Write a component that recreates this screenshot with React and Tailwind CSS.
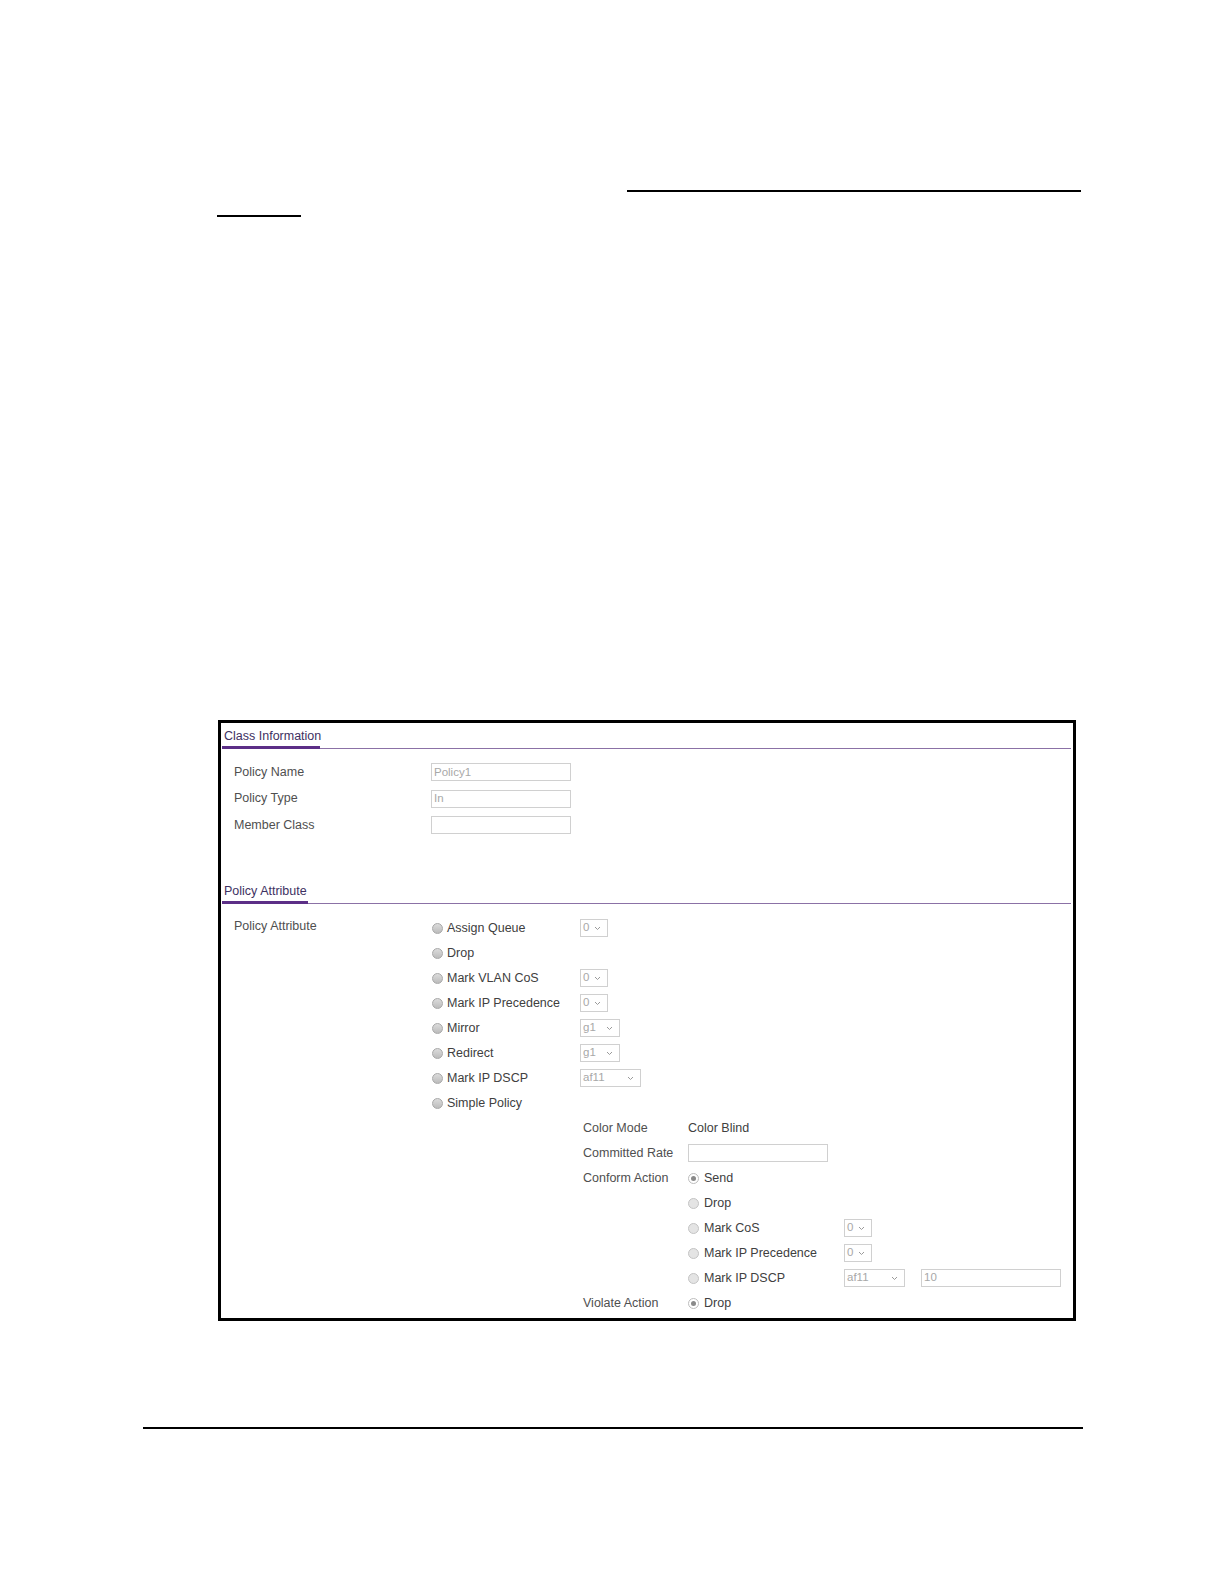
import React from "react";

function Chevron() {
  return (
    <svg className="w-[7px] h-[5px]" viewBox="0 0 7 5" fill="none">
      <path d="M1 1l2.5 2.5L6 1" stroke="#9a9a9a" strokeWidth="1" />
    </svg>
  );
}

function Select({ value, w }) {
  return (
    <div
      className={`${w} h-[18px] border border-[#d0d0d0] bg-white flex items-center justify-between pl-[2px] pr-[6px] text-[11.5px] text-[#a8a8a8]`}
    >
      <span>{value}</span>
      <Chevron />
    </div>
  );
}

function TextBox({ value }) {
  return (
    <div className="w-[140px] h-[18px] border border-[#d0d0d0] bg-white flex items-center pl-[2px] text-[11.5px] text-[#a8a8a8]">
      {value}
    </div>
  );
}

function Radio({ checked, light }) {
  if (checked) {
    return (
      <span className="w-[11px] h-[11px] rounded-full border border-[#bdbdbd] bg-white flex items-center justify-center shrink-0">
        <span className="w-[5px] h-[5px] rounded-full bg-[#8a8a8a]" />
      </span>
    );
  }
  return (
    <span
      className={`w-[11px] h-[11px] rounded-full border shrink-0 ${
        light
          ? "border-[#c4c4c4] bg-[#e4e4e4]"
          : "border-[#a8a8a8] bg-gradient-to-b from-[#dcdcdc] to-[#bcbcbc]"
      }`}
    />
  );
}

function Heading({ title, w }) {
  return (
    <div className="ml-[1px] border-b border-[#8b71a6] flex">
      <span
        className={`${w} whitespace-nowrap pl-[2px] -mb-px border-b-[3px] border-[#5c2f87] text-[12.5px] text-[#3e3162] leading-[18px] pb-[1px]`}
      >
        {title}
      </span>
    </div>
  );
}

const attrRows = [
  { label: "Assign Queue", sel: "0", w: "w-[28px]" },
  { label: "Drop" },
  { label: "Mark VLAN CoS", sel: "0", w: "w-[28px]" },
  { label: "Mark IP Precedence", sel: "0", w: "w-[28px]" },
  { label: "Mirror", sel: "g1", w: "w-[40px]" },
  { label: "Redirect", sel: "g1", w: "w-[40px]" },
  { label: "Mark IP DSCP", sel: "af11", w: "w-[61px]" },
  { label: "Simple Policy" },
];

const conformRows = [
  { label: "Send", checked: true },
  { label: "Drop" },
  { label: "Mark CoS", sel: "0", w: "w-[28px]" },
  { label: "Mark IP Precedence", sel: "0", w: "w-[28px]" },
  { label: "Mark IP DSCP", sel: "af11", w: "w-[61px]", text: "10" },
];

export default function App() {
  return (
    <div className="w-[1224px] h-[1584px] bg-white font-['Liberation_Sans',Arial,sans-serif] text-[12.5px] text-[#4f4f4f]">
      <div className="pt-[190px]">
        <div className="ml-[627px] w-[454px] h-[2px] bg-black" />
        <div className="mt-[23px] ml-[217px] w-[84px] h-[2px] bg-black" />
      </div>

      <div className="mt-[503px] ml-[218px] w-[858px] h-[601px] border-[3px] border-black pt-[4px] pr-[2px]">
        <Heading title="Class Information" w="w-[98px]" />

        <div className="mt-[10px] pl-[13px]">
          {[
            ["Policy Name", "Policy1"],
            ["Policy Type", "In"],
            ["Member Class", ""],
          ].map(([label, val]) => (
            <div key={label} className="h-[26.5px] flex items-center">
              <span className="w-[197px]">{label}</span>
              <TextBox value={val} />
            </div>
          ))}
        </div>

        <div className="mt-[43px]">
          <Heading title="Policy Attribute" w="w-[86px]" />
        </div>

        <div className="mt-[12px] pl-[13px] flex">
          <div className="w-[197px] h-[22px] flex items-center">
            Policy Attribute
          </div>
          <div className="flex flex-col">
            {attrRows.map((r) => (
              <div key={r.label} className="h-[25px] flex items-center">
                <div className="w-[149px] flex items-center gap-[4px] pl-[1px] text-[#404040]">
                  <Radio />
                  <span>{r.label}</span>
                </div>
                {r.sel && <Select value={r.sel} w={r.w} />}
              </div>
            ))}

            <div className="pl-[152px]">
              <div className="h-[25px] flex items-center">
                <span className="w-[105px]">Color Mode</span>
                <span className="text-[#404040]">Color Blind</span>
              </div>
              <div className="h-[25px] flex items-center">
                <span className="w-[105px]">Committed Rate</span>
                <TextBox value="" />
              </div>
              <div className="flex">
                <span className="w-[105px] h-[25px] flex items-center">
                  Conform Action
                </span>
                <div className="flex flex-col">
                  {conformRows.map((r) => (
                    <div key={r.label} className="h-[25px] flex items-center">
                      <div className="w-[156px] flex items-center gap-[5px] text-[#404040]">
                        <Radio checked={r.checked} light />
                        <span>{r.label}</span>
                      </div>
                      {r.sel && <Select value={r.sel} w={r.w} />}
                      {r.text && (
                        <div className="ml-[16px]">
                          <TextBox value={r.text} />
                        </div>
                      )}
                    </div>
                  ))}
                </div>
              </div>
              <div className="h-[25px] flex items-center">
                <span className="w-[105px]">Violate Action</span>
                <div className="flex items-center gap-[5px] text-[#404040]">
                  <Radio checked light />
                  <span>Drop</span>
                </div>
              </div>
            </div>
          </div>
        </div>
      </div>

      <div className="mt-[106px] ml-[143px] w-[940px] h-[2px] bg-black" />
    </div>
  );
}
